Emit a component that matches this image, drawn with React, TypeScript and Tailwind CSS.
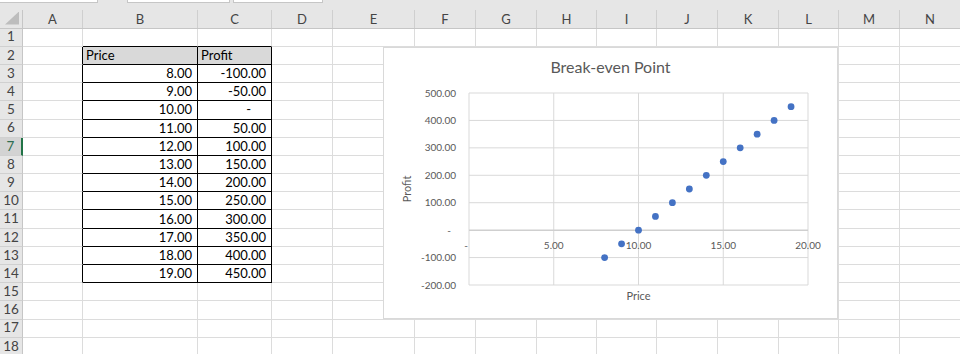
import clsx from "clsx";

const COLS = ["A", "B", "C", "D", "E", "F", "G", "H", "I", "J", "K", "L", "M", "N"];
const ROWS = Array.from({ length: 18 }, (_, i) => i + 1);

const prices = [8, 9, 10, 11, 12, 13, 14, 15, 16, 17, 18, 19];
const profit = (p: number) => (p - 10) * 50;

const fmt = (v: number) => (v === 0 ? "-" : v.toFixed(2));

// plot area, in px inside the chart frame
const PL = 85;
const PR = 424;
const PT = 45;
const PB = 237;
const xAt = (p: number) => PL + (p / 20) * (PR - PL);
const yAt = (v: number) => PB - ((v + 200) / 700) * (PB - PT);

function cellContent(r: number, ci: number) {
  if (r === 2 && ci === 1) return { text: "Price", align: "left" };
  if (r === 2 && ci === 2) return { text: "Profit", align: "left" };
  if (r >= 3 && r <= 14) {
    const p = prices[r - 3];
    if (ci === 1) return { text: p.toFixed(2), align: "right" };
    if (ci === 2) {
      const v = profit(p);
      return { text: fmt(v), align: v === 0 ? "dash" : "right" };
    }
  }
  return null;
}

function Cell({ r, ci }: { r: number; ci: number }) {
  const inTable = r >= 2 && r <= 14;
  const rightBlack = inTable && ci <= 2;
  const bottomBlack = (ci === 1 || ci === 2) && r >= 1 && r <= 14;
  const c = cellContent(r, ci);
  return (
    <div
      className={clsx(
        "flex h-[18.2px] items-center overflow-hidden border-r border-b text-[13px] leading-none text-black",
        rightBlack ? "border-r-black" : "border-r-[#dcdcdc]",
        bottomBlack ? "border-b-black" : "border-b-[#dcdcdc]",
        r === 2 && ci >= 1 && ci <= 2 && "bg-[#d9d9d9]",
        c?.align === "left" && "justify-start pl-[3px]",
        c?.align === "right" && "justify-end pr-[5px]",
        c?.align === "dash" && "justify-end pr-[20px]",
      )}
    >
      {c?.text}
    </div>
  );
}

function Chart() {
  const yTicks = [500, 400, 300, 200, 100, 0, -100, -200];
  const xTicks = [0, 5, 10, 15, 20];
  return (
    <div className="absolute top-[47px] left-[383px] h-[272px] w-[455px] border border-[#d9d9d9] bg-white">
      <svg width="453" height="270" className="block font-['Lato','Liberation_Sans',sans-serif]">
        <text x="226.5" y="25" textAnchor="middle" fontSize="16" fill="#595959">
          Break-even Point
        </text>
        {xTicks.map((t) => (
          <line key={"vx" + t} x1={xAt(t)} x2={xAt(t)} y1={PT} y2={PB} stroke="#d9d9d9" strokeWidth="1" />
        ))}
        {yTicks.map((t) => (
          <line
            key={"hy" + t}
            x1={PL}
            x2={PR}
            y1={yAt(t)}
            y2={yAt(t)}
            stroke={t === 0 ? "#cfcfcf" : "#d9d9d9"}
            strokeWidth={t === 0 ? 1.5 : 1}
          />
        ))}
        {yTicks.map((t) => (
          <text
            key={"ly" + t}
            x={t === 0 ? 67 : 72}
            y={yAt(t) + 3.5}
            textAnchor="end"
            fontSize="10"
            fill="#595959"
          >
            {fmt(t)}
          </text>
        ))}
        {xTicks.map((t) => (
          <text
            key={"lx" + t}
            x={t === 0 ? 82 : xAt(t)}
            y="201"
            textAnchor="middle"
            fontSize="10"
            fill="#595959"
          >
            {fmt(t)}
          </text>
        ))}
        {prices.map((p) => (
          <circle key={p} cx={xAt(p)} cy={yAt(profit(p))} r="3.4" fill="#4472c4" />
        ))}
        <text x="254.5" y="252" textAnchor="middle" fontSize="11" fill="#595959">
          Price
        </text>
        <text
          x="0"
          y="0"
          transform="translate(27 141) rotate(-90)"
          textAnchor="middle"
          fontSize="11"
          fill="#595959"
        >
          Profit
        </text>
      </svg>
    </div>
  );
}

export default function App() {
  return (
    <div className="relative h-[354px] w-[960px] overflow-hidden bg-white font-['Lato','Liberation_Sans',sans-serif]">
      {/* formula bar remnant */}
      <div className="flex h-[10px] items-start gap-[29px] bg-[#e6e6e6]">
        <div className="h-[3px] w-[98px] border-b border-r border-[#c6c6c6] bg-white" />
        <div className="flex gap-[3px]">
          <div className="h-[3px] w-[103px] border-x border-b border-[#c6c6c6] bg-white" />
          <div className="h-[3px] w-[90px] border-x border-b border-[#c6c6c6] bg-white" />
        </div>
      </div>

      <div className="grid grid-cols-[23px_60px_115px_74px_61px_82px_61px_61px_60px_60px_61px_61px_60px_61px_61px]">
        {/* corner + column headers */}
        <div className="relative h-[18.6px] border-r border-b border-[#c6c6c6] bg-[#e6e6e6]">
          <div className="absolute right-[3px] bottom-[3px] h-[13px] w-[14px] bg-[#bdbdbd] [clip-path:polygon(100%_0,100%_100%,0_100%)]" />
        </div>
        {COLS.map((c) => (
          <div
            key={c}
            className="flex h-[18.6px] items-center justify-center border-b border-b-[#c6c6c6] bg-[#e6e6e6] text-[13px] text-[#444]"
          >
            <span className="flex h-full w-full items-center justify-center border-r border-r-[#cfcfcf] pt-[2px]">
              {c}
            </span>
          </div>
        ))}

        {ROWS.map((r) => (
          <div key={r} className="contents">
            <div
              className={clsx(
                "flex h-[18.2px] items-center justify-center border-b border-b-[#d0d0d0] text-[13.5px] leading-none",
                r === 7
                  ? "border-r-2 border-r-[#217346] bg-[#d3d3d3] text-[#2e6e50]"
                  : "border-r border-r-[#c6c6c6] bg-[#e6e6e6] text-[#444]",
              )}
            >
              {r}
            </div>
            {COLS.map((_, ci) => (
              <Cell key={ci} r={r} ci={ci} />
            ))}
          </div>
        ))}
      </div>

      <Chart />
    </div>
  );
}
